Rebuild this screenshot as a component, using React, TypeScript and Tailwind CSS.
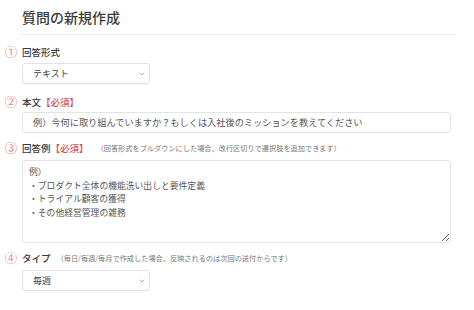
const font = "font-['Noto_Sans_CJK_JP','Noto_Sans',sans-serif]";

function Chevron() {
  return (
    <svg width="6" height="4" viewBox="0 0 6 4" fill="none" className="shrink-0">
      <path d="M1 1 3 3 5 1" stroke="#a0a0a0" strokeWidth="0.8" strokeLinecap="round" />
    </svg>
  );
}

function Num({ n }: { n: string }) {
  return (
    <span className="w-[22px] shrink-0 text-center text-[12.5px] leading-[14px] font-light text-[#e0574f]">{n}</span>
  );
}

function Select({ value }: { value: string }) {
  return (
    <div className="flex h-[21px] w-[128px] items-center justify-between rounded-[3px] border border-[#e4e4e4] bg-white pl-[10px] pr-[4px] text-[9px] text-[#444] shadow-[0_1px_1px_rgba(0,0,0,0.04)]">
      <span>{value}</span>
      <Chevron />
    </div>
  );
}

function Required() {
  return <span className="text-[#d9534f]">【必須】</span>;
}

export default function App() {
  return (
    <div className={`h-[310px] w-[474px] overflow-hidden bg-white text-[#333] ${font}`}>
      <h1 className="h-[34px] pl-[22px] pt-[7px] text-[14px] leading-[20px] font-medium text-[#3a3a3a]">質問の新規作成</h1>
      <div className="ml-[20px] w-[436px] border-t border-[#ececec]" />

      <section className="mt-[10px]">
        <div className="flex items-center">
          <Num n="①" />
          <span className="text-[9.5px] leading-[14px] font-medium text-[#3a3a3a]">回答形式</span>
        </div>
        <div className="mt-[4px] pl-[22px]">
          <Select value="テキスト" />
        </div>
      </section>

      <section className="mt-[11px]">
        <div className="flex items-center">
          <Num n="②" />
          <span className="text-[9.5px] leading-[14px] font-medium text-[#3a3a3a]">
            本文
            <Required />
          </span>
        </div>
        <div className="mt-[3px] pl-[22px]">
          <div className="flex h-[21px] w-[429px] items-center rounded-[3px] border border-[#e4e4e4] bg-white pl-[10px] text-[9.2px] text-[#555]">
            例）今何に取り組んでいますか？もしくは入社後のミッションを教えてください
          </div>
        </div>
      </section>

      <section className="mt-[8px]">
        <div className="flex items-center">
          <Num n="③" />
          <span className="text-[9.5px] leading-[14px] font-medium text-[#3a3a3a]">
            回答例
            <Required />
          </span>
          <span className="ml-[8px] text-[7.2px] leading-[14px] text-[#777]">
            （回答形式をプルダウンにした場合、改行区切りで選択肢を追加できます）
          </span>
        </div>
        <div className="mt-[5px] pl-[22px]">
          <textarea
            readOnly
            className="block h-[83px] w-[429px] rounded-[3px] border border-[#e4e4e4] bg-white px-[6px] pt-[4px] text-[8.8px] leading-[13.5px] text-[#555] outline-none"
            defaultValue={"例）\n・プロダクト全体の機能洗い出しと要件定義\n・トライアル顧客の獲得\n・その他経営管理の雑務"}
          />
        </div>
      </section>

      <section className="mt-[8px]">
        <div className="flex items-center">
          <Num n="④" />
          <span className="text-[9.5px] leading-[14px] font-medium text-[#3a3a3a]">タイプ</span>
          <span className="ml-[6px] text-[7.2px] leading-[14px] text-[#777]">
            （毎日/毎週/毎月で作成した場合、反映されるのは次回の送付からです）
          </span>
        </div>
        <div className="mt-[5px] pl-[22px]">
          <Select value="毎週" />
        </div>
      </section>
    </div>
  );
}
